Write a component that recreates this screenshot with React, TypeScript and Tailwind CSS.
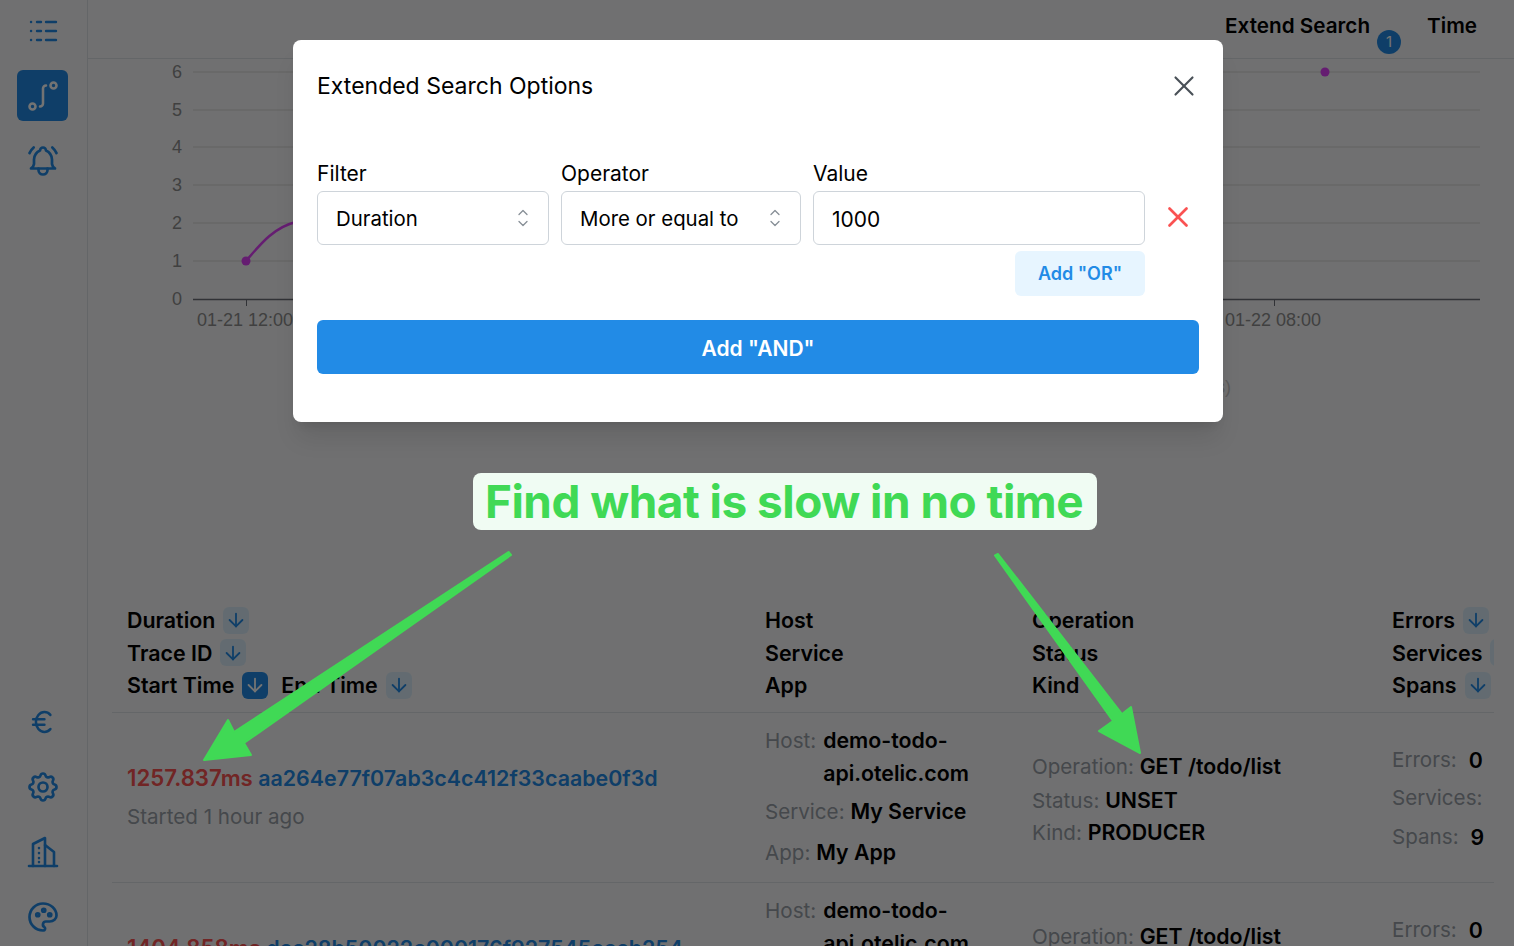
import { ArrowDown, X } from "lucide-react";
import {
  TbBellRinging,
  TbCurrencyEuro,
  TbPalette,
  TbRoute2,
  TbSettings,
} from "react-icons/tb";
import type { ReactNode } from "react";

function ListIcon() {
  return (
    <svg width="30" height="24" viewBox="0 0 30 24" fill="none" stroke="currentColor" strokeWidth="2.4" strokeLinecap="round">
      {[3, 12, 21].map((y) => (
        <g key={y}>
          <path d={`M3 ${y}h.1`} />
          <path d={`M9 ${y}h4`} />
          <path d={`M18 ${y}h10`} />
        </g>
      ))}
    </svg>
  );
}

function BuildingIcon() {
  return (
    <svg width="32" height="32" viewBox="0 0 32 32" fill="none" stroke="currentColor" strokeWidth="2.6" strokeLinecap="round" strokeLinejoin="round">
      <path d="M2 30h28" />
      <path d="M6 30V8l12-6v28" />
      <path d="M18 9l9 7v14" />
      <path d="M12 12v.1M12 17v.1M12 22v.1M12 26v.1" />
    </svg>
  );
}

function NavItem({ children, active }: { children: ReactNode; active?: boolean }) {
  return (
    <div
      className={`w-[51px] h-[51px] rounded-md flex items-center justify-center ${
        active ? "bg-[#228be6] text-white" : "text-[#228be6]"
      }`}
    >
      {children}
    </div>
  );
}

function Sidebar() {
  return (
    <aside className="w-[88px] shrink-0 h-full border-r border-[#dee2e6] flex flex-col justify-between items-center pt-[5px] pb-[4px] pr-[2px]">
      <div className="flex flex-col gap-[14px]">
        <NavItem><ListIcon /></NavItem>
        <NavItem active><TbRoute2 size={36} strokeWidth={1.7} /></NavItem>
        <NavItem><TbBellRinging size={36} strokeWidth={1.8} /></NavItem>
      </div>
      <div className="flex flex-col gap-[14px]">
        <NavItem><TbCurrencyEuro size={34} strokeWidth={1.8} /></NavItem>
        <NavItem><TbSettings size={36} strokeWidth={1.8} /></NavItem>
        <NavItem><BuildingIcon /></NavItem>
        <NavItem><TbPalette size={36} strokeWidth={1.8} /></NavItem>
      </div>
    </aside>
  );
}

function Chart() {
  const rows = [
    { y: 72, label: "6" },
    { y: 110, label: "5" },
    { y: 147, label: "4" },
    { y: 185, label: "3" },
    { y: 223, label: "2" },
    { y: 261, label: "1" },
  ];
  return (
    <svg width="1426" height="545" viewBox="88 59 1426 545" className="block" style={{ fontFamily: '"Liberation Sans", sans-serif' }}>
      {rows.map((r) => (
        <g key={r.y}>
          <line x1="193" x2="1480" y1={r.y} y2={r.y} stroke="#d8d8d8" />
          <text x="182" y={r.y + 6} textAnchor="end" fontSize="18" fill="#8f8f8f">{r.label}</text>
        </g>
      ))}
      <text x="182" y="305" textAnchor="end" fontSize="18" fill="#8f8f8f">0</text>
      <line x1="193" x2="1480" y1="299.5" y2="299.5" stroke="#6e7079" strokeWidth="1.5" />
      <line x1="246.5" x2="246.5" y1="299" y2="306" stroke="#6e7079" />
      <line x1="1274.5" x2="1274.5" y1="299" y2="306" stroke="#6e7079" />
      <text x="245" y="326" textAnchor="middle" fontSize="18" fill="#8f8f8f">01-21 12:00</text>
      <text x="1273" y="326" textAnchor="middle" fontSize="18" fill="#8f8f8f">01-22 08:00</text>
      <path d="M246 261C262 242 275 227 296 222C340 215 400 240 460 220" fill="none" stroke="#e040fb" strokeWidth="2.5" />
      <circle cx="246" cy="261" r="4.5" fill="#e040fb" />
      <circle cx="1325" cy="72" r="4.5" fill="#e040fb" />
      <text x="1231" y="393" textAnchor="end" fontSize="18" fill="#c8c8c8">(ms)</text>
    </svg>
  );
}

function SortButton({ active }: { active?: boolean }) {
  return (
    <span
      className={`inline-flex w-[26px] h-[27px] rounded-md items-center justify-center shrink-0 ${
        active ? "bg-[#228be6] text-white" : "bg-[#dceefb] text-[#228be6]"
      }`}
    >
      <ArrowDown size={22} strokeWidth={2} />
    </span>
  );
}

function HeadLine({ children }: { children: ReactNode }) {
  return <div className="h-[32.5px] flex items-center gap-2 whitespace-nowrap">{children}</div>;
}

function Field({ label, value, className }: { label: string; value: string; className?: string }) {
  return (
    <div className={`whitespace-nowrap ${className ?? ""}`}>
      <span className="text-[#9aa1a8]">{label}: </span>
      <span className="font-semibold text-black text-[21.3px]">{value}</span>
    </div>
  );
}

function HostField() {
  return (
    <div className="flex gap-[7px] leading-[33px]">
      <span className="text-[#9aa1a8]">Host:</span>
      <span className="font-semibold text-black text-[21.3px] w-[150px]">demo-todo-api.otelic.com</span>
    </div>
  );
}

function CountField({ label, value, className }: { label: string; value: string; className?: string }) {
  return (
    <div className={`flex gap-3 whitespace-nowrap ${className ?? ""}`}>
      <span className="text-[#9aa1a8]">{label}:</span>
      <span className="font-semibold text-black text-[21.3px]">{value}</span>
    </div>
  );
}

function TraceRow({ duration, traceId }: { duration: string; traceId: string }) {
  return (
    <div className="h-[170px] grid grid-cols-[653px_267px_360px_102px] border-t border-[#dee2e6] text-[20.6px] leading-[30px]">
      <div className="pl-[15px] pt-[50px] whitespace-nowrap">
        <div className="font-semibold text-[21.4px]">
          <span className="text-[#fa5252] text-[22.2px]">{duration}</span>{" "}
          <span className="text-[#228be6]">{traceId}</span>
        </div>
        <div className="mt-[9px] text-[#9aa1a8]">Started 1 hour ago</div>
      </div>
      <div className="pt-[11px]">
        <HostField />
        <Field label="Service" value="My Service" className="mt-[6px]" />
        <Field label="App" value="My App" className="mt-[10px]" />
      </div>
      <div className="pt-[38px]">
        <Field label="Operation" value="GET /todo/list" />
        <Field label="Status" value="UNSET" className="mt-[3px]" />
        <Field label="Kind" value="PRODUCER" className="mt-[1px]" />
      </div>
      <div className="pt-[32px]">
        <CountField label="Errors" value="0" />
        <CountField label="Services" value="4" className="mt-[8px]" />
        <CountField label="Spans" value="9" className="mt-[9px]" />
      </div>
    </div>
  );
}

function TraceTable() {
  return (
    <div className="ml-6 mr-5 overflow-hidden text-black">
      <div className="h-[108px] grid grid-cols-[653px_267px_360px_102px] text-[21.4px] font-semibold">
        <div className="pl-[15px]">
          <HeadLine>Duration <SortButton /></HeadLine>
          <HeadLine>Trace ID <SortButton /></HeadLine>
          <HeadLine>
            Start Time <SortButton active />
            <span className="ml-[5px]">End Time</span> <SortButton />
          </HeadLine>
        </div>
        <div>
          <HeadLine>Host</HeadLine>
          <HeadLine>Service</HeadLine>
          <HeadLine>App</HeadLine>
        </div>
        <div>
          <HeadLine>Operation</HeadLine>
          <HeadLine>Status</HeadLine>
          <HeadLine>Kind</HeadLine>
        </div>
        <div>
          <HeadLine>Errors <SortButton /></HeadLine>
          <HeadLine>Services <SortButton /></HeadLine>
          <HeadLine>Spans <SortButton /></HeadLine>
        </div>
      </div>
      <TraceRow duration="1257.837ms" traceId="aa264e77f07ab3c4c412f33caabe0f3d" />
      <TraceRow duration="1404.858ms" traceId="dcc28b50022c000176f927545cccb254" />
    </div>
  );
}

function SelectBox({ value, className }: { value: string; className: string }) {
  return (
    <div className={`${className} h-[54px] rounded-md border border-[#ced4da] pl-[18px] pr-[18px] flex items-center justify-between text-[20.4px] text-black bg-white`}>
      <span className="whitespace-nowrap pt-[3px]">{value}</span>
      <svg width="14" height="20" viewBox="0 0 14 20" fill="none" stroke="#868e96" strokeWidth="1.3" strokeLinecap="round" strokeLinejoin="round" className="ml-[-1px]">
        <path d="M3 6.5l4-4 4 4" />
        <path d="M3 13.5l4 4 4-4" />
      </svg>
    </div>
  );
}

function SearchModal() {
  return (
    <div className="w-[930px] h-[382px] mt-10 bg-white rounded-lg px-6 shadow-xl text-black">
      <div className="h-[92px] flex items-center justify-between">
        <span className="text-[23px]">Extended Search Options</span>
        <X size={34} strokeWidth={1.5} className="text-[#495057] mr-[-2px]" />
      </div>
      <div className="flex gap-3 mt-[25px] text-[21px] leading-[34px]">
        <span className="w-[232px]">Filter</span>
        <span className="w-[240px]">Operator</span>
        <span>Value</span>
      </div>
      <div className="flex gap-3">
        <SelectBox value="Duration" className="w-[232px]" />
        <SelectBox value="More or equal to" className="w-[240px]" />
        <div className="w-[332px] h-[54px] rounded-md border border-[#ced4da] pl-[18px] pt-[3px] flex items-center text-[21px]">1000</div>
        <X size={34} strokeWidth={1.9} className="text-[#fa5252] ml-[4px] mt-[9px]" />
      </div>
      <div className="w-[828px] flex justify-end mt-[6px]">
        <button type="button" className="w-[130px] h-[45px] rounded-md bg-[#e7f5ff] text-[#228be6] text-[18px] font-semibold">Add "OR"</button>
      </div>
      <button type="button" className="w-full h-[54px] mt-[24px] rounded-md bg-[#228be6] text-white text-[21px] font-semibold pt-[3px]">Add "AND"</button>
    </div>
  );
}

function Annotation() {
  return (
    <>
      <svg width="1514" height="946" viewBox="0 0 1514 946" className="absolute inset-0 pointer-events-none" fill="#40d955" stroke="#40d955" strokeLinejoin="round" strokeWidth="2">
        <path d="M508.5 552L511 555L244 743L251 755L204 760L228 720L234 732Z" />
        <path d="M995 555.5L998 554L1122 714L1131 707L1140 753L1099 731L1113 721Z" />
      </svg>
      <div className="absolute left-[473px] top-[473px] w-[624px] h-[57px] rounded-lg bg-[#f0fcf3] text-[#40d955] text-[45.9px] font-bold flex items-center justify-center whitespace-nowrap tracking-[-0.5px] pt-[2px] pr-[2px]">
        Find what is slow in no time
      </div>
    </>
  );
}

export default function App() {
  return (
    <div className="relative w-full h-screen overflow-hidden bg-[#f8f9fa] flex" style={{ fontFamily: 'Inter, "Noto Sans", sans-serif' }}>
      <Sidebar />
      <main className="flex-1 min-w-0">
        <header className="relative h-[59px] border-b border-[#dee2e6] text-[20.7px] font-semibold text-black">
          <div className="h-[52px] pr-[37px] flex items-center justify-end gap-[57px]">
            <span>Extend Search</span>
            <span>Time</span>
          </div>
          <span className="absolute left-[1289px] top-[30px] w-6 h-6 rounded-full bg-[#228be6] text-white text-[15px] font-normal flex items-center justify-center">1</span>
        </header>
        <Chart />
        <TraceTable />
      </main>
      <div className="absolute inset-0 bg-black/55 flex justify-center items-start pl-[2px]">
        <SearchModal />
      </div>
      <Annotation />
    </div>
  );
}
